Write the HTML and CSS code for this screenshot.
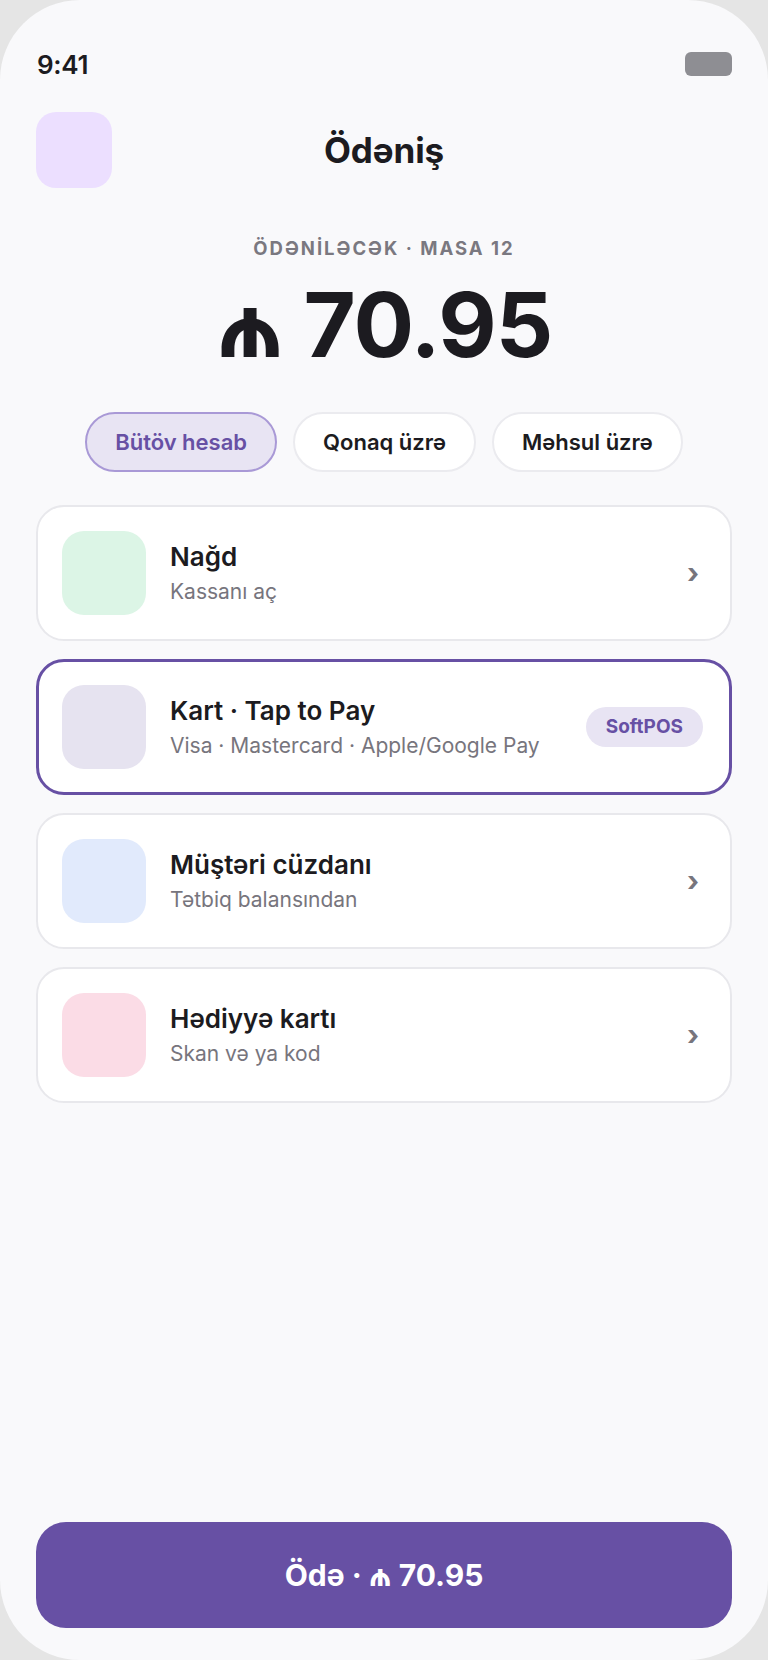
FILE: index.html
```html
<!DOCTYPE html>
<html lang="az">
<head>
<meta charset="utf-8">
<title>Ödəniş</title>
<link rel="stylesheet" href="styles.css">
</head>
<body>
<div class="phone">
  <div class="status">
    <span class="time">9:41</span>
    <span class="battery"></span>
  </div>
  <div class="header">
    <div class="avatar"></div>
    <h1 class="title">Ödəniş</h1>
    <div class="spacer"></div>
  </div>
  <div class="due-label">ÖDƏNİLƏCƏK · MASA 12</div>
  <div class="amount">₼ 70.95</div>
  <div class="chips">
    <button class="chip chip-active">Bütöv hesab</button>
    <button class="chip">Qonaq üzrə</button>
    <button class="chip">Məhsul üzrə</button>
  </div>
  <div class="methods">
    <div class="method">
      <div class="method-icon icon-green"></div>
      <div class="method-text">
        <div class="method-title">Nağd</div>
        <div class="method-sub">Kassanı aç</div>
      </div>
      <span class="chevron">›</span>
    </div>
    <div class="method method-selected">
      <div class="method-icon icon-lavender"></div>
      <div class="method-text">
        <div class="method-title">Kart · Tap to Pay</div>
        <div class="method-sub">Visa · Mastercard · Apple/Google Pay</div>
      </div>
      <span class="badge">SoftPOS</span>
    </div>
    <div class="method">
      <div class="method-icon icon-blue"></div>
      <div class="method-text">
        <div class="method-title">Müştəri cüzdanı</div>
        <div class="method-sub">Tətbiq balansından</div>
      </div>
      <span class="chevron">›</span>
    </div>
    <div class="method">
      <div class="method-icon icon-pink"></div>
      <div class="method-text">
        <div class="method-title">Hədiyyə kartı</div>
        <div class="method-sub">Skan və ya kod</div>
      </div>
      <span class="chevron">›</span>
    </div>
  </div>
  <button class="pay">Ödə · ₼ 70.95</button>
</div>
</body>
</html>
```

FILE: styles.css
```css
* { box-sizing: border-box; }
html, body { margin: 0; padding: 0; }
body {
  background: #e5e5e5;
  font-family: Inter, "Noto Sans", "DejaVu Sans", sans-serif;
  color: #1c1b20;
}
.phone {
  width: 768px;
  height: 1660px;
  background: #f9f9fb;
  border-radius: 80px;
  overflow: hidden;
  display: flex;
  flex-direction: column;
  padding: 0 36px 32px;
}
.status {
  height: 40px;
  margin-top: 44px;
  display: flex;
  align-items: center;
  justify-content: space-between;
}
.time {
  font-size: 26px;
  font-weight: 600;
  letter-spacing: -0.3px;
  margin-left: 1px;
}
.battery {
  width: 47px;
  height: 24px;
  border-radius: 6px;
  background: #8e8e93;
}
.header {
  margin-top: 28px;
  display: grid;
  grid-template-columns: 76px 1fr 76px;
  align-items: center;
}
.avatar {
  width: 76px;
  height: 76px;
  border-radius: 20px;
  background: #ecdfff;
}
.title {
  margin: 0;
  text-align: center;
  font-size: 35px;
  font-weight: 700;
  letter-spacing: -0.1px;
}
.due-label {
  margin-top: 49px;
  text-align: center;
  font-size: 18.5px;
  font-weight: 700;
  letter-spacing: 2px;
  color: #7a7880;
  line-height: 22px;
}
.amount {
  margin-top: 16px;
  text-align: center;
  font-size: 90px;
  font-weight: 700;
  line-height: 100px;
  letter-spacing: -1px;
}
.chips {
  margin-top: 37px;
  display: flex;
  justify-content: center;
  gap: 16px;
}
.chip {
  height: 60px;
  padding: 0 28px;
  border-radius: 30px;
  border: 2px solid #ebebef;
  background: #ffffff;
  font-family: inherit;
  font-size: 22px;
  font-weight: 600;
  color: #1c1b20;
}
.chip-active {
  background: #e8e4f3;
  border-color: #a999d6;
  color: #6750a4;
}
.methods {
  margin-top: 33px;
  display: flex;
  flex-direction: column;
  gap: 18px;
}
.method {
  height: 136px;
  display: flex;
  align-items: center;
  gap: 24px;
  padding: 0 24px;
  background: #ffffff;
  border: 2px solid #e8e8ec;
  border-radius: 28px;
}
.method-selected {
  border: 3px solid #6750a4;
  padding: 0 26px 0 23px;
}
.method-icon {
  width: 84px;
  height: 84px;
  border-radius: 22px;
  flex: none;
}
.icon-green { background: #dcf5e6; }
.icon-lavender { background: #e6e3f0; }
.icon-blue { background: #e1eafc; }
.icon-pink { background: #fbdce6; }
.method-text {
  flex: 1;
  display: flex;
  flex-direction: column;
  gap: 6px;
}
.method-title {
  font-size: 26px;
  font-weight: 600;
  line-height: 32px;
}
.method-sub {
  font-size: 21px;
  color: #77757d;
  line-height: 26px;
}
.chevron {
  font-size: 28px;
  font-weight: 700;
  color: #77757d;
  line-height: 1;
  margin-right: 7px;
}
.badge {
  height: 40px;
  line-height: 40px;
  padding: 0 20px;
  border-radius: 20px;
  background: #e8e4f3;
  color: #6750a4;
  font-size: 19px;
  font-weight: 700;
}
.pay {
  margin-top: auto;
  height: 106px;
  border: none;
  border-radius: 30px;
  background: #6750a4;
  color: #ffffff;
  font-family: inherit;
  font-size: 30px;
  font-weight: 700;
}
```
